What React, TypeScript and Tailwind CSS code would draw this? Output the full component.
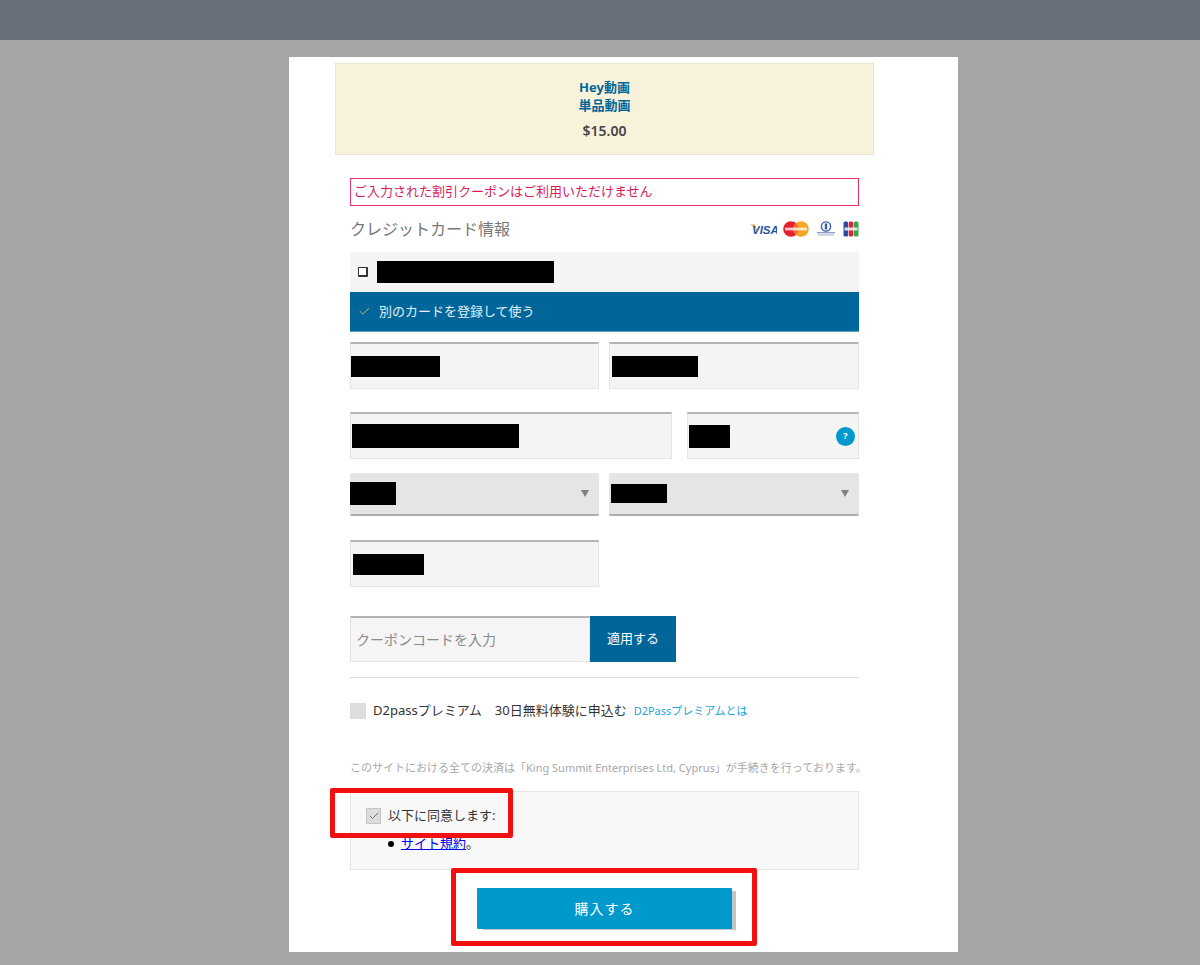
import React from 'react';
import { Check } from 'lucide-react';

const cjk = '[font-family:"Noto_Sans","Noto_Sans_CJK_JP",sans-serif]';

interface FieldProps {
  width: string;
  barClass: string;
  children?: React.ReactNode;
}

// text input box, the value is blacked out in the picture
const Field: React.FC<FieldProps> = ({ width, barClass, children }) => (
  <div className={`${width} h-[47px] flex items-center justify-between bg-[#f4f4f4] border border-[#e4e4e4] border-t-2 border-t-[#b4b4b4]`}>
    <div className={`${barClass} bg-black`} />
    {children}
  </div>
);

const SelectBox: React.FC<{ barClass: string }> = ({ barClass }) => (
  <div className="w-[249px] h-[43px] flex items-center justify-between bg-[#e5e5e5] border-b-2 border-b-[#adadad] rounded-[2px]">
    <div className={`${barClass} bg-black`} />
    <div className="mr-[10px] w-0 h-0 border-x-[4px] border-x-transparent border-t-[7px] border-t-[#808080]" />
  </div>
);

const CardIcons: React.FC = () => (
  <div className="flex items-center">
    <svg width="27" height="14" viewBox="0 0 27 14" className="mr-[6px]">
      <path d="M0 2.5 L5 2.5 L7.5 9 Q5 4.5 0 2.5Z" fill="#e8a33d" />
      <text x="2" y="12" fontSize="11.5" fontWeight="700" fontStyle="italic" fill="#23539b" fontFamily="Liberation Sans">VISA</text>
    </svg>
    <svg width="26" height="16" viewBox="0 0 26 16" className="mr-[7px]">
      <circle cx="8" cy="8" r="7.8" fill="#e3202f" />
      <circle cx="18" cy="8" r="7.8" fill="#f5a623" />
      <path d="M13 2 A7.8 7.8 0 0 1 13 14 A7.8 7.8 0 0 1 13 2Z" fill="#f0702a" />
      <rect x="2" y="6.6" width="22" height="2.8" fill="#fff" opacity="0.75" />
    </svg>
    <svg width="20" height="16" viewBox="0 0 20 16" className="mr-[7px]">
      <circle cx="10" cy="5.5" r="4.6" fill="none" stroke="#3a5fa8" strokeWidth="1.4" />
      <rect x="8.8" y="2.5" width="2.4" height="6" fill="#3a5fa8" />
      <rect x="1" y="11" width="18" height="1.4" fill="#8fa3c8" />
      <rect x="2" y="13.4" width="16" height="1.2" fill="#b3c0da" />
    </svg>
    <svg width="16" height="16" viewBox="0 0 16 16">
      <rect x="0.5" y="0.5" width="4.6" height="15" rx="1.5" fill="#2b4f9e" />
      <rect x="5.7" y="0.5" width="4.6" height="15" rx="1.5" fill="#d9233c" />
      <rect x="10.9" y="0.5" width="4.6" height="15" rx="1.5" fill="#35a84a" />
      <rect x="1.5" y="6.5" width="13" height="3" fill="#fff" opacity="0.8" />
    </svg>
  </div>
);

export default function App() {
  return (
    <div className={`relative w-[1200px] h-[965px] overflow-hidden bg-[#a5a5a5] ${cjk}`}>
      <div className="h-[40px] bg-[#6a7079]" />

      <div className="ml-[289px] mt-[17px] w-[669px] h-[895px] bg-white pt-[6px]">
        <div className="ml-[46px] w-[539px] h-[92px] bg-[#f8f2da] border border-[#e9e5cf] pt-[14px] text-center">
          <div className="text-[13px] leading-[18px] font-bold text-[#006699]">Hey動画</div>
          <div className="text-[13px] leading-[18px] font-bold text-[#006699]">単品動画</div>
          <div className="mt-[7px] text-[14px] leading-[20px] font-semibold text-[#444444]">$15.00</div>
        </div>

        <div className="ml-[61px] w-[509px] mt-[23px]">
          <div className="h-[28px] border border-[#e5306a] flex items-center pl-[3px] text-[13px] text-[#d81b60]">
            ご入力された割引クーポンはご利用いただけません
          </div>

          <div className="mt-[11px] h-[24px] flex items-center justify-between">
            <span className="text-[16px] text-[#777777]">クレジットカード情報</span>
            <CardIcons />
          </div>

          <div className="mt-[11px] h-[40px] bg-[#f4f4f4] flex items-center">
            <div className="ml-[8px] w-[10px] h-[10px] border border-[#333333] border-r-2 border-b-2 rounded-[1px] bg-white" />
            <div className="ml-[9px] w-[177px] h-[22px] bg-black" />
          </div>
          <div className="h-[40px] bg-[#006699] border-b border-b-[#5d9dbd] flex items-center">
            <Check className="ml-[8px] w-[13px] h-[13px] text-[#e0c860]" strokeWidth={1.5} />
            <span className="ml-[8px] text-[13px] text-white/90">別のカードを登録して使う</span>
          </div>

          <div className="mt-[10px] flex justify-between">
            <Field width="w-[249px]" barClass="ml-0 w-[89px] h-[21px]" />
            <Field width="w-[250px]" barClass="ml-[2px] w-[86px] h-[21px]" />
          </div>

          <div className="mt-[23px] flex justify-between">
            <Field width="w-[322px]" barClass="ml-[1px] w-[167px] h-[24px]" />
            <Field width="w-[172px]" barClass="ml-[1px] w-[41px] h-[23px]">
              <div className="mr-[3px] w-[19px] h-[19px] rounded-full bg-[#0099cc] flex items-center justify-center text-[9px] font-bold text-white">
                ?
              </div>
            </Field>
          </div>

          <div className="mt-[14px] flex justify-between">
            <SelectBox barClass="w-[46px] h-[23px]" />
            <div className="w-[250px] h-[43px] flex items-center justify-between bg-[#e5e5e5] border-b-2 border-b-[#adadad] rounded-[2px]">
              <div className="ml-[2px] w-[56px] h-[19px] bg-black" />
              <div className="mr-[10px] w-0 h-0 border-x-[4px] border-x-transparent border-t-[7px] border-t-[#808080]" />
            </div>
          </div>

          <div className="mt-[24px]">
            <Field width="w-[249px]" barClass="ml-[2px] w-[71px] h-[21px]" />
          </div>

          <div className="mt-[29px] flex h-[46px]">
            <div className="w-[240px] bg-[#f5f5f5] border border-[#e4e4e4] border-t-2 border-t-[#b4b4b4] flex items-center pl-[5px] text-[14px] text-[#8a8a8a]">
              クーポンコードを入力
            </div>
            <div className="w-[86px] bg-[#006699] flex items-center justify-center text-[13px] text-white">適用する</div>
          </div>

          <div className="mt-[15px] border-t border-t-[#dddddd]" />

          <div className="mt-[25px] h-[16px] flex items-center">
            <div className="w-[16px] h-[16px] bg-[#dddddd]" />
            <span className="ml-[7px] text-[13px] text-[#333333] whitespace-pre">D2passプレミアム　30日無料体験に申込む</span>
            <span className="ml-[7px] text-[11px] text-[#1fa3d6]">D2Passプレミアムとは</span>
          </div>

          <div className="mt-[41px] text-[11px] leading-[16px] text-[#a8a8a8] whitespace-nowrap">
            このサイトにおける全ての決済は「King Summit Enterprises Ltd, Cyprus」が手続きを行っております。
          </div>

          <div className="mt-[15px] h-[79px] bg-[#f8f8f8] border border-[#e6e6e6] pl-[15px] pt-[16px]">
            <div className="flex items-center h-[16px]">
              <div className="w-[15px] h-[16px] bg-[#dddddd] border border-[#c4c4c4] flex items-center justify-center">
                <Check className="w-[12px] h-[12px] text-[#3a5a78]" strokeWidth={1.5} />
              </div>
              <span className="ml-[7px] text-[13px] text-[#333333]">以下に同意します:</span>
            </div>
            <div className="mt-[12px] ml-[22px] flex items-center h-[16px] text-[13px] text-[#333333]">
              <div className="w-[6px] h-[6px] rounded-full bg-black" />
              <a href="#" className="ml-[7px] text-[#0000ee] underline">サイト規約</a>
              <span>。</span>
            </div>
          </div>

          <div className="mt-[18px] ml-[127px] w-[255px] h-[41px] bg-[#0099cc] rounded-[1px] shadow-[5px_2px_0_-1px_#c4c4c4] flex items-center justify-center text-[14px] text-white tracking-[1px]">
            購入する
          </div>
        </div>
      </div>

      <div className="absolute left-[330px] top-[788px] w-[183px] h-[50px] border-[5px] border-[#f01010] rounded-[2px]" />
      <div className="absolute left-[451px] top-[868px] w-[306px] h-[78px] border-[5px] border-[#f01010] rounded-[2px]" />
    </div>
  );
}
